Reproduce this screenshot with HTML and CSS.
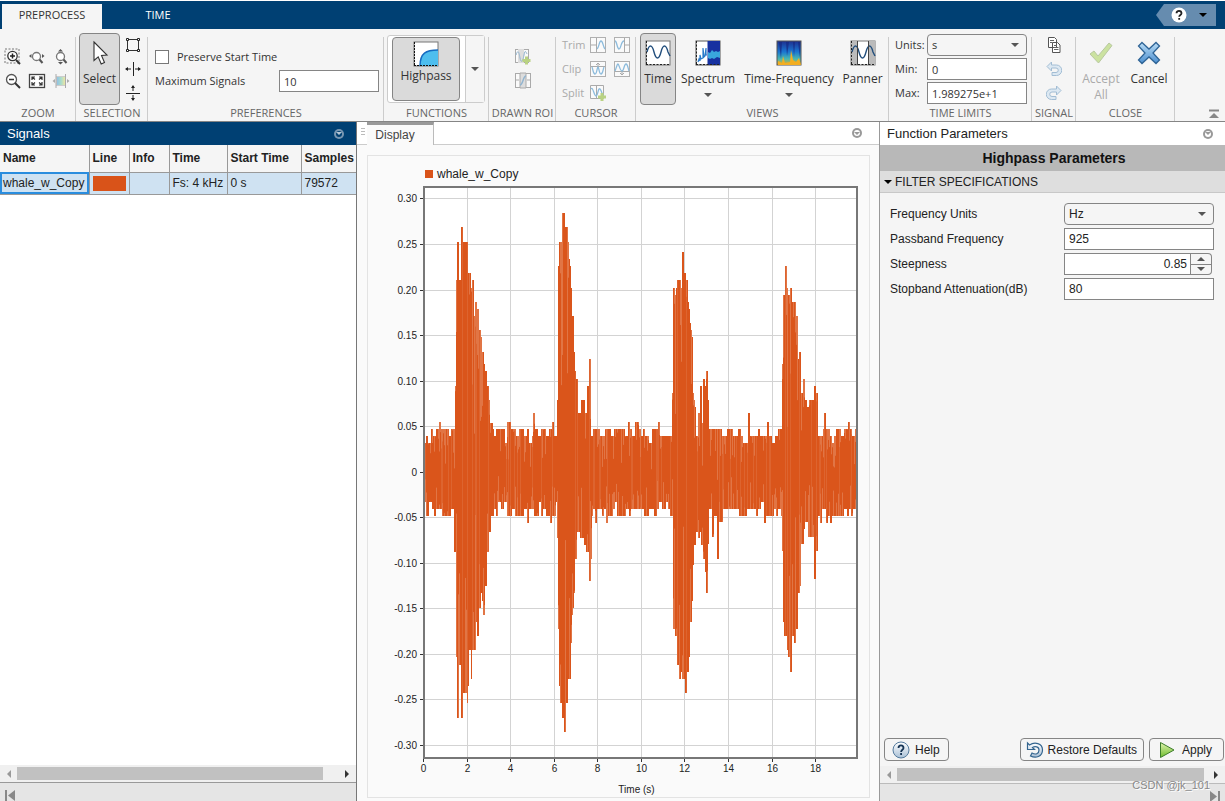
FILE: index.html
```html
<!DOCTYPE html>
<html lang="en">
<head>
<meta charset="utf-8">
<title>Signal Analyzer</title>
<link rel="stylesheet" href="styles.css">
</head>
<body>
<svg class="defs" aria-hidden="true">
  <defs>
    <linearGradient id="glass" x1="0" y1="0" x2="0" y2="1"><stop offset="0" stop-color="#ffffff"/><stop offset="1" stop-color="#a9c0d6"/></linearGradient>
    <linearGradient id="blue" x1="0" y1="0" x2="0" y2="1"><stop offset="0" stop-color="#b9dcf5"/><stop offset="1" stop-color="#4c8fd0"/></linearGradient>
    <linearGradient id="green" x1="0" y1="0" x2="0" y2="1"><stop offset="0" stop-color="#e2f4b0"/><stop offset="1" stop-color="#6dbb2d"/></linearGradient>
    <linearGradient id="parula" x1="0" y1="0" x2="1" y2="0"><stop offset="0" stop-color="#8fbde6"/><stop offset=".5" stop-color="#a8dccb"/><stop offset="1" stop-color="#f5e6a0"/></linearGradient>
    <linearGradient id="heat" x1="0" y1="0" x2="0" y2="1"><stop offset="0" stop-color="#1e2f8f"/><stop offset=".45" stop-color="#1a76d2"/><stop offset=".75" stop-color="#49b8b0"/><stop offset="1" stop-color="#eea91c"/></linearGradient>
    <symbol id="wavebox" viewBox="0 0 16 16"><rect x=".5" y=".5" width="15" height="15" fill="#fafafa" stroke="#b0b0b0"/></symbol>
    <symbol id="undo" viewBox="0 0 16 16"><path d="M5.500 1L1 5.500l4.500 4.500V7h4.500a2 2 0 0 1 0 4.500H6v3h4.500a5 5 0 0 0 0-10.500h-5z" fill="#dce8f2" stroke="#a2bdd4"/></symbol>
  </defs>
</svg>

<header class="titlebar">
  <nav class="tabs">
    <button class="tab active">PREPROCESS</button>
    <button class="tab">TIME</button>
  </nav>
  <button class="help-menu" aria-label="Help">
    <svg width="16" height="16" viewBox="0 0 16 16"><circle cx="8" cy="8" r="7.500" fill="#fff"/><path d="M5.500 6.300c0-3.300 5-3.300 5 0 0 1.700-2.300 1.700-2.300 3.500M8.200 11v1.800" fill="none" stroke="#222" stroke-width="1.800"/></svg>
    <span class="caret black"></span>
  </button>
</header>

<div class="toolbar">
  <section class="group zoom">
    <div class="body">
      <div class="icons">
        <button aria-label="Zoom in"><svg width="18" height="18" viewBox="0 0 18 18"><rect x="1" y="1" width="14" height="14" fill="none" stroke="#777" stroke-dasharray="2 1.500"/><circle cx="8.500" cy="8" r="4.700" fill="#fff" stroke="#333" stroke-width="1.300"/><path d="M6 8h5M8.500 5.500v5" stroke="#222" stroke-width="1.500"/><path d="M12 12l4 4" stroke="#333" stroke-width="2"/></svg></button>
        <button aria-label="Zoom in x"><svg width="18" height="18" viewBox="0 0 18 18"><circle cx="8.500" cy="8.500" r="4" fill="#fff" stroke="#777" stroke-width="1.300"/><path d="M11.500 11.500l3 3.500" stroke="#555" stroke-width="2"/><path d="M3.500 6v4L1 8zM14 6v4l2.500-2z" fill="#555"/></svg></button>
        <button aria-label="Zoom in y"><svg width="18" height="18" viewBox="0 0 18 18"><circle cx="8.500" cy="8.500" r="4" fill="#fff" stroke="#777" stroke-width="1.300"/><path d="M11.500 11.500l3 3.500" stroke="#555" stroke-width="2"/><path d="M6 3.500h5L8.500 1zM6 14h5l-2.500 2.500z" fill="#555"/></svg></button>
        <button aria-label="Zoom out"><svg width="18" height="18" viewBox="0 0 18 18"><circle cx="7.500" cy="7.500" r="5" fill="#fff" stroke="#555" stroke-width="1.300"/><path d="M5 7.500h5" stroke="#333" stroke-width="1.500"/><path d="M11 11l5 5" stroke="#333" stroke-width="2"/></svg></button>
        <button aria-label="Fit to view"><svg width="18" height="18" viewBox="0 0 18 18"><rect x="1.500" y="2.500" width="15" height="13" fill="#fff" stroke="#444" stroke-width="1.300"/><path d="M4 8V5h3M11 5h3v3M14 10v3h-3M7 13H4v-3M4 5l3 2.500M14 5l-3 2.500M4 13l3-2.500M14 13l-3-2.500" fill="none" stroke="#333" stroke-width="1.200"/></svg></button>
        <button aria-label="Pan" disabled><svg width="18" height="18" viewBox="0 0 18 18"><rect x="4.500" y="4.500" width="9" height="9" fill="url(#parula)" stroke="#ccc"/><path d="M4 2v14M13.500 2v14" stroke="#aaa"/><path d="M3 7v4L.500 9zM15 7v4l2.500-2z" fill="#aaa"/></svg></button>
      </div>
    </div>
    <h2>ZOOM</h2>
  </section>

  <section class="group selection">
    <div class="body">
      <button class="big pressed select-tool"><svg width="24" height="26" viewBox="0 0 24 26"><path d="M6 2l13 13-5.500.500 3 7-3.300 1.500-3-7.200L6 20.500z" fill="#fff" stroke="#333" stroke-width="1.100"/></svg><span>Select</span></button>
      <div class="stack">
        <button aria-label="Box select"><svg width="16" height="16" viewBox="0 0 16 16"><path d="M2.500 2.500h11v11h-11z" fill="none" stroke="#333"/><path d="M1.500 1.500h2v2h-2zM12.500 1.500h2v2h-2zM1.500 12.500h2v2h-2zM12.500 12.500h2v2h-2z" fill="#fff" stroke="#222"/></svg></button>
        <button aria-label="Horizontal select"><svg width="16" height="16" viewBox="0 0 16 16"><path d="M8.500 1v14M1 8h5M10 8h5" stroke="#222"/><path d="M3 6v4L0 8zM13 6v4L16 8z" fill="#222"/></svg></button>
        <button aria-label="Vertical select"><svg width="16" height="16" viewBox="0 0 16 16"><path d="M1 8.500h14M8 1v5M8 10v5" stroke="#222"/><path d="M6 3h4L8 0zM6 13h4L8 16z" fill="#222"/></svg></button>
      </div>
    </div>
    <h2>SELECTION</h2>
  </section>

  <section class="group preferences">
    <div class="body">
      <label class="check"><input type="checkbox">Preserve Start Time</label>
      <div class="field"><label for="maxsig">Maximum Signals</label><input id="maxsig" type="text" value="10"></div>
    </div>
    <h2>PREFERENCES</h2>
  </section>

  <section class="group functions">
    <div class="body">
      <div class="gallery">
        <button class="big pressed highpass"><svg width="26" height="26" viewBox="0 0 26 26"><rect x="1" y="1" width="24" height="24" fill="#fff" stroke="#777"/><path d="M7 25C7 12 13 9 25 9v16z" fill="#4ebeee"/><path d="M7 25C7 12 13 9 25 9" fill="none" stroke="#156bc1" stroke-width="1.500"/><path d="M1.500 1v24M1 24.500h24" stroke="#111" stroke-dasharray="2 1"/></svg><span>Highpass</span></button>
        <button class="more" aria-label="More functions"><span class="caret"></span></button>
      </div>
    </div>
    <h2>FUNCTIONS</h2>
  </section>

  <section class="group roi">
    <div class="body">
      <button disabled aria-label="Add region"><svg width="18" height="18" viewBox="0 0 18 18"><rect x="1.500" y="1.500" width="13" height="13" fill="#fafafa" stroke="#aaa"/><path d="M4 1v14h6V1z" fill="#ddd"/><path d="M2 7c2-6 3-3 4 3s3 3 4-3 2-3 3-1" fill="none" stroke="#92b4cf"/><path d="M12.500 8.500v8M8.500 12.500h8" stroke="#b9d283" stroke-width="3"/></svg></button>
      <button disabled aria-label="Edit region"><svg width="18" height="18" viewBox="0 0 18 18"><rect x="1.500" y="1.500" width="15" height="14" fill="#fafafa" stroke="#aaa"/><path d="M6 1v15h6V1z" fill="#ddd" stroke="#aaa"/><path d="M2 8h3M13 8h3" stroke="#aaa"/><path d="M6 13c3 0 3-9 6-9" fill="none" stroke="#92b4cf" stroke-width="1.500"/></svg></button>
    </div>
    <h2>DRAWN ROI</h2>
  </section>

  <section class="group cursor">
    <div class="body">
      <span>Trim</span>
      <button disabled aria-label="Trim left"><svg width="16" height="16"><use href="#wavebox"/><path d="M6.500 1v14M1 8h5" stroke="#aaa"/><path d="M7 12c2-1 2-8 4-8s2 6 4 8" fill="none" stroke="#8cbbdc" stroke-width="1.300"/></svg></button>
      <button disabled aria-label="Trim right"><svg width="16" height="16"><use href="#wavebox"/><path d="M10.500 1v14M11 8h5" stroke="#aaa"/><path d="M1 4c2 0 2 8 4 8s2-8 5-8" fill="none" stroke="#8cbbdc" stroke-width="1.300"/></svg></button>
      <span>Clip</span>
      <button disabled aria-label="Clip above"><svg width="16" height="16"><use href="#wavebox"/><path d="M1 5.500h14M8 2v4M6 4l2-2 2 2" fill="none" stroke="#aaa"/><path d="M2 6c1 2 1 7 3 7s2-7 3-7 1 7 3 7 2-5 3-7" fill="none" stroke="#8cbbdc" stroke-width="1.300"/></svg></button>
      <button disabled aria-label="Clip below"><svg width="16" height="16"><use href="#wavebox"/><path d="M1 10.500h14M8 14v-4M6 12l2 2 2-2" fill="none" stroke="#aaa"/><path d="M1 10c1-2 2-7 3-7s2 7 4 7 2-7 4-7 2 5 3 7" fill="none" stroke="#8cbbdc" stroke-width="1.300"/></svg></button>
      <span>Split</span>
      <button disabled aria-label="Split"><svg width="16" height="16" viewBox="0 0 16 16"><path d="M.500.500h13v13H.500z" fill="#fafafa" stroke="#aaa"/><path d="M6.500 1v13" stroke="#aaa"/><path d="M1 4c2-3 3 7 5 7s2-9 4-7 2 7 4 7" fill="none" stroke="#8cbbdc" stroke-width="1.300"/><path d="M12 8v8M8 12h8" stroke="#b9d283" stroke-width="3"/></svg></button>
    </div>
    <h2>CURSOR</h2>
  </section>

  <section class="group views">
    <div class="body">
      <button class="big pressed time"><svg width="26" height="26" viewBox="0 0 26 26"><rect x="1" y="1" width="24" height="24" fill="#fff" stroke="#777"/><path d="M2 12C4 4 7 4 9 12s5 8 7 0 5-8 7 0l2 4" fill="none" stroke="#234f7d" stroke-width="1.400"/><path d="M1.500 1v24M1 24.500h24" stroke="#222" stroke-dasharray="2 1.500"/></svg><span>Time</span></button>
      <button class="big spectrum"><svg width="26" height="26" viewBox="0 0 26 26"><rect x="1" y="1" width="24" height="24" fill="#fff" stroke="#555"/><path d="M12.500 1h12.500v24H12.500z" fill="#1731a0"/><path d="M13 12l2 1 2-3 2 2 2-1 2 1 2-1v7l-3-1-3 2-2-1-2 1-2-1z" fill="#39a6dd"/><path d="M3 22l1-3 1 2V15l1 4 2-1V8l1 9 1-1 1-8v7h1" fill="none" stroke="#2879c9" stroke-width="1.200"/><path d="M1.500 1v24M1 24.500h24" stroke="#222" stroke-dasharray="2 1.500"/></svg><span>Spectrum</span><i class="caret"></i></button>
      <button class="big frequency"><svg width="26" height="26" viewBox="0 0 26 26"><rect x="1" y="1" width="24" height="24" fill="url(#heat)" stroke="#555"/><path d="M3 2h3l-1 17zM10 2h3l-2 14zM17 2h2l-1 15zM22 2h2v16z" fill="#172983" opacity=".75"/><path d="M2 25v-4l4 2 1-7 2 7 5-1 1-12 2 10 3 2 3-4 2 7z" fill="#f3ae21"/></svg><span>Time-Frequency</span><i class="caret"></i></button>
      <button class="big panner"><svg width="26" height="26" viewBox="0 0 26 26"><rect x="1" y="1" width="24" height="24" fill="#fff" stroke="#777"/><path d="M1 1h6v24H1zM19 1h6v24h-6z" fill="#bbb"/><path d="M2 12C4 4 7 4 9 12s5 8 7 0 5-8 7 0l2 4" fill="none" stroke="#234f7d" stroke-width="1.400"/><path d="M7.500 1v24M18.500 1v24" stroke="#444"/><path d="M1.500 1v24M1 24.500h24" stroke="#222" stroke-dasharray="2 1.500"/></svg><span>Panner</span></button>
    </div>
    <h2>VIEWS</h2>
  </section>

  <section class="group limits">
    <div class="body">
      <label for="units">Units:</label><span class="select"><select id="units"><option>s</option></select></span>
      <label for="min">Min:</label><input id="min" type="text" value="0">
      <label for="max">Max:</label><input id="max" type="text" value="1.989275e+1">
    </div>
    <h2>TIME LIMITS</h2>
  </section>

  <section class="group signal">
    <div class="body">
      <button aria-label="Duplicate"><svg width="16" height="16" viewBox="0 0 16 16"><path d="M2.500.500h6l2 2v8h-8zM6.500 5.500h5l2.500 2.500v7.500H6.500z" fill="#fff" stroke="#555"/><path d="M4 3.500h4M4 5.500h2M8 8.500h3M8 10.500h4.500M8 12.500h4.500" stroke="#666"/></svg></button>
      <button disabled aria-label="Undo"><svg width="16" height="16"><use href="#undo"/></svg></button>
      <button disabled aria-label="Redo"><svg class="flip" width="16" height="16"><use href="#undo"/></svg></button>
    </div>
    <h2>SIGNAL</h2>
  </section>

  <section class="group close">
    <div class="body">
      <button class="big accept" disabled><svg width="26" height="26" viewBox="0 0 26 26"><path d="M2 14l4-3 4 5L21 3l3 2.500L10.500 23z" fill="#cbe2a0" stroke="#b8c8a0"/></svg><span>Accept All</span></button>
      <button class="big cancel"><svg width="26" height="26" viewBox="0 0 26 26"><path d="M6 2.500l7 6.500 7-6.500 3.500 3.500-6.500 7 6.500 7-3.500 3.500-7-6.500-7 6.500L2.500 20l6.500-7-6.500-7z" fill="url(#blue)" stroke="#2f6496" stroke-width="1.300"/></svg><span>Cancel</span></button>
    </div>
    <h2>CLOSE</h2>
  </section>
  <button class="collapse" aria-label="Collapse toolbar"><svg width="12" height="10" viewBox="0 0 12 10"><path d="M1 1.500h10" stroke="#888" stroke-width="2"/><path d="M6 4l5 5H1z" fill="#888"/></svg></button>
</div>

<main class="workspace">
  <section class="signals">
    <header class="panel-head dark"><h3>Signals</h3><button class="round" aria-label="Signals menu"><span class="caret"></span></button></header>
    <div class="fill">
      <table>
        <colgroup><col class="c-name"><col class="c-line"><col class="c-info"><col class="c-time"><col class="c-start"><col></colgroup>
        <thead><tr><th>Name</th><th>Line</th><th>Info</th><th>Time</th><th>Start Time</th><th>Samples</th></tr></thead>
        <tbody><tr><td class="focus">whale_w_Copy</td><td><span class="swatch"></span></td><td></td><td>Fs: 4 kHz</td><td>0 s</td><td>79572</td></tr></tbody>
      </table>
    </div>
    <div class="scroll"><span class="left"></span><span class="thumb"></span><span class="right"></span></div>
    <footer class="dock"><svg width="12" height="12" viewBox="0 0 12 12"><path d="M2 1v11" stroke="#888" stroke-width="2"/><path d="M11 1v11L4 6.500z" fill="#888"/></svg></footer>
  </section>

  <section class="display">
    <header class="panel-head"><span class="grip"></span><button class="display-tab">Display</button><button class="round" aria-label="Display menu"><span class="caret"></span></button></header>
    <div class="card"><div class="legend"><span></span>whale_w_Copy</div><svg id="chart" class="chart" role="img" aria-label="whale_w_Copy"></svg></div>
  </section>

  <section class="params">
    <header class="panel-head"><h3>Function Parameters</h3><button class="round" aria-label="Parameters menu"><span class="caret"></span></button></header>
    <h2 class="params-title">Highpass Parameters</h2>
    <h4 class="params-section"><span class="caret black"></span>FILTER SPECIFICATIONS</h4>
    <form class="fill">
      <label for="fu">Frequency Units</label><span class="select"><select id="fu"><option>Hz</option></select></span>
      <label for="pf">Passband Frequency</label><input id="pf" type="text" value="925">
      <label for="st">Steepness</label><span class="spinner"><input id="st" type="text" inputmode="decimal" value="0.85"><span><button type="button" aria-label="Increase"><i class="caret up"></i></button><button type="button" aria-label="Decrease"><i class="caret"></i></button></span></span>
      <label for="sa">Stopband Attenuation(dB)</label><input id="sa" type="text" value="80">
    </form>
    <div class="actions">
      <button><svg width="18" height="18" viewBox="0 0 18 18"><circle cx="9" cy="9" r="8" fill="url(#glass)" stroke="#557b9e"/><path d="M6.500 7c0-3.500 5-3.500 5 0 0 1.700-2.400 1.900-2.400 4M9.100 12v2" fill="none" stroke="#173555" stroke-width="1.800"/></svg>Help</button>
      <button class="restore"><svg width="18" height="18" viewBox="0 0 18 18"><path d="M1.500 2l2 2c5-3.500 13-2 13 5 0 7-7 8.500-12 6l1.500-3c3.500 2 7 1 7-3 0-3.500-4-4-6.500-2.500l2 2h-7z" fill="url(#glass)" stroke="#34658f" stroke-width="1.200"/></svg>Restore Defaults</button>
      <button class="apply"><svg width="16" height="18" viewBox="0 0 16 18"><path d="M1.500 1.500L15 9 1.500 16.500z" fill="url(#green)" stroke="#3c7d2a"/></svg>Apply</button>
    </div>
    <div class="scroll"><span class="left"></span><span class="thumb"></span><span class="right"></span></div>
    <footer class="dock"><svg width="12" height="12" viewBox="0 0 12 12"><path d="M10 1v11" stroke="#888" stroke-width="2"/><path d="M1 1v11l7-5.500z" fill="#888"/></svg></footer>
    <span class="watermark">CSDN @jk_101</span>
  </section>
</main>
<script src="chart.js"></script>
</body>
</html>
```

FILE: styles.css
```css
* { box-sizing: border-box; }
body { margin: 0; height: 100vh; overflow: hidden; display: flex; flex-direction: column; font: 12px/16px "Liberation Sans", Arial, sans-serif; color: #222; background: #f5f5f5; border-top: 1px solid #fff; }
button, input, select { font: inherit; color: inherit; margin: 0; }
button { border: 0; padding: 0; background: none; display: flex; align-items: center; justify-content: center; }
h2, h3, h4 { margin: 0; font-weight: normal; }
input[type="text"], select { width: 100%; height: 22px; border: 1px solid #858585; background: #fff; padding: 0 4px; border-radius: 0; min-width: 0; }
select { appearance: none; background: #f5f5f5; border-radius: 4px; }
.select { position: relative; }
.select::after { content: ""; position: absolute; right: 8px; top: 9px; border: 4px solid transparent; border-top: 4px solid #555; border-bottom: 0; pointer-events: none; }
.defs { position: absolute; width: 0; height: 0; }
.caret { flex: none; display: block; width: 0; height: 0; border: 4px solid transparent; border-top-color: #555; border-bottom: 0; }
.caret.black { border-top-color: #000; }
.caret.up { border-top: 0; border-bottom: 4px solid #555; }

.titlebar { flex: none; display: flex; justify-content: space-between; height: 28px; background: #004073; }
.tabs { display: flex; padding: 3px 0 0 2px; }
.tab { width: 100px; padding-bottom: 3px; font: 11px/16px "Open Sans", sans-serif; color: #fff; }
.tab + .tab { width: 112px; }
.tab.active { background: #f5f5f5; color: #333; }
.help-menu { width: 60px; height: 22px; margin: 3px 9px 0 0; padding-left: 6px; gap: 12px; background: #668caf; clip-path: polygon(8px 0, 100% 0, 100% 100%, 8px 100%, 0 50%); }

.toolbar { flex: none; display: flex; height: 93px; padding-top: 4px; background: #f5f5f5; border-bottom: 1px solid #858585; font: 12px/16px "Open Sans", sans-serif; color: #333; }
.group { flex: none; display: flex; flex-direction: column; background: linear-gradient(#ccc, #ccc) right 4px / 1px 100% no-repeat; }
.group .body { flex: 1; display: flex; }
.group h2 { height: 16px; font-size: 11px; line-height: 16px; text-align: center; color: #666; white-space: nowrap; }
.group button:disabled { color: #aaa; }
.big { flex-direction: column; justify-content: flex-start; height: 72px; padding-top: 6px; border: 1px solid transparent; border-radius: 4px; }
.big svg { flex: none; }
.big span { margin-top: 5px; white-space: nowrap; }
.big .caret { margin-top: 6px; }
.pressed { background: #dadada; border-color: #858585; }
.zoom { width: 76px; }
.icons { display: grid; grid-template-columns: repeat(3, 24px); grid-auto-rows: 24px; padding: 12px 0 0 1px; }
.selection { width: 72px; }
.selection .body { padding-left: 3px; }
.select-tool { width: 41px; }
.stack { display: flex; flex-direction: column; gap: 8px; padding: 4px 0 0 5px; }
.preferences { width: 236px; }
.preferences .body { flex-direction: column; gap: 2px; padding: 13px 5px 0 7px; }
.preferences, .limits, .cursor { font-size: 11px; }
.check { display: flex; align-items: center; gap: 8px; height: 22px; }
.check input { appearance: none; width: 14px; height: 14px; border: 1px solid #777; background: #fff; }
.field { display: flex; align-items: center; justify-content: space-between; }
.field input[type="text"] { width: 100px; }
.functions { width: 105px; }
.functions .body { padding: 2px 4px 0 3px; }
.gallery { display: flex; width: 98px; height: 68px; border: 1px solid #ccc; border-radius: 3px; background: #fff; }
.highpass { width: 68px; height: 64px; margin: 1px 5px 0 4px; padding-top: 3px; }
.highpass span { margin-top: 1px; }
.more { flex: 1; background: #f5f5f5; border-left: 1px solid #ccc; }
.roi { width: 67px; }
.roi .body { flex-direction: column; align-items: center; gap: 6px; padding-top: 15px; }
.cursor { width: 80px; }
.cursor .body { display: grid; grid-template: repeat(3, 16px) / 20px 16px 16px; gap: 8px; padding: 4px 0 0 6px; color: #aaa; align-content: start; }
.views { width: 253px; }
.views .body { padding-left: 4px; }
.time { width: 36px; }
.spectrum { width: 64px; }
.frequency { width: 98px; }
.panner { width: 49px; }
.limits { width: 143px; }
.limits .body { display: grid; grid-template-columns: 29px 100px; gap: 2px 3px; padding: 1px 0 0 6px; align-items: center; align-content: start; }
.signal { width: 44px; }
.signal .body { flex-direction: column; align-items: center; gap: 8px; padding-top: 4px; }
.flip { transform: scaleX(-1); }
.close { width: 99px; }
.close .body { padding-left: 1px; }
.accept { width: 48px; }
.accept span { white-space: normal; }
.cancel { width: 48px; }
.collapse { margin: auto 5px 2px auto; }

.workspace { flex: 1; min-height: 0; display: grid; grid-template-columns: 357px minmax(0, 1fr) 346px; }
.workspace > section { display: flex; flex-direction: column; min-width: 0; min-height: 0; }
.panel-head { flex: none; display: flex; align-items: center; justify-content: space-between; height: 23px; padding: 0 12px 0 7px; background: #fff; }
.panel-head h3 { font-size: 13px; }
.panel-head.dark { background: #004073; color: #fff; }
.round { width: 10px; height: 10px; border-radius: 50%; background: #999; }
.round::before { content: ""; width: 6px; height: 6px; border-radius: 50%; background: #fff; }
.round .caret { border-width: 3px 3px 0; border-top-color: #999; margin-left: -6px; }
.dark .round { background: #7896b2; }
.dark .round::before { background: #004073; }
.dark .round .caret { border-top-color: #b5c7d6; }
.fill { flex: 1; min-height: 0; }
.signals { border-right: 1px solid #777; background: #fff; }
table { width: 100%; table-layout: fixed; border-collapse: collapse; white-space: nowrap; }
.c-name { width: 89px; }
.c-line { width: 40px; }
.c-info { width: 40px; }
.c-time { width: 58px; }
.c-start { width: 74px; }
th, td { border: 1px solid #999; padding: 0 3px; text-align: left; overflow: hidden; }
th:first-child { border-left: 0; padding-left: 3px; }
th:last-child, td:last-child { border-right: 0; }
th { height: 27px; background: #f5f5f5; border-top: 0; }
td { height: 22px; background: #cfe2f2; }
td.focus { border-left: 0; padding: 0 2px 0 3px; outline: 2px solid #2a8dde; outline-offset: -2px; }
.swatch { display: block; height: 15px; background: #d95319; }
.scroll { flex: none; display: flex; align-items: center; height: 17px; padding: 0 7px; background: #f0f0f0; }
.scroll .left, .scroll .right { border: 4px solid transparent; }
.scroll .left { border-left: 0; border-right-color: #999; }
.scroll .right { border-right: 0; border-left-color: #333; }
.thumb { flex: 1; height: 13px; margin: 0 22px 0 6px; background: #c1c1c1; }
.params .thumb { margin-right: 10px; }
.dock { flex: none; display: flex; height: 19px; padding: 6px 4px 0; background: #e5e5e5; border-top: 1px solid #999; }

.display { background: #fafafa; }
.display .panel-head { padding: 0 17px 0 0; border-bottom: 1px solid #ccc; }
.grip { align-self: stretch; width: 9px; margin-right: 1px; background: repeating-linear-gradient(#bbb 0 1px, #fff 1px 3px) 4px 6px / 4px 9px no-repeat; }
.display-tab { align-self: stretch; width: 67px; margin: 0 auto -1px 0; padding-right: 10px; background: #fafafa; border-top: 3px solid #999; border-right: 1px solid #bbb; color: #444; }
.card { flex: 1; min-height: 0; display: flex; flex-direction: column; margin: 10px 9px 3px 10px; border: 1px solid #e3e3e3; }
.legend { flex: none; display: flex; align-items: center; gap: 4px; padding: 10px 0 0 57px; }
.legend span { width: 8px; height: 8px; background: #d95319; }
.chart { flex: 1; display: block; width: 100%; min-height: 0; font-size: 10px; fill: #222; }

.params { position: relative; border-left: 1px solid #999; background: #f5f5f5; }
.params-title { height: 26px; padding-left: 3px; font-size: 14px; line-height: 26px; font-weight: bold; text-align: center; background: #b8b8b8; color: #111; }
.params-section { display: flex; align-items: center; gap: 3px; height: 22px; padding-left: 4px; background: #dedede; border-bottom: 1px solid #c8c8c8; }
.params form { display: grid; grid-template-columns: 171px 1fr; grid-auto-rows: 22px; gap: 3px; padding: 10px 11px 0 10px; align-items: center; align-content: start; }
.spinner { display: flex; padding-right: 2px; }
.spinner input[type="text"] { text-align: right; padding-right: 3px; }
.spinner > span { flex: none; width: 21px; display: flex; flex-direction: column; border: 1px solid #858585; border-left: 0; border-radius: 0 4px 4px 0; }
.spinner button { flex: 1; }
.spinner button + button { border-top: 1px solid #858585; }
.actions { display: flex; gap: 5px; padding: 0 1px 5px 4px; }
.actions button { height: 23px; padding: 0 8px 0 7px; gap: 5px; border: 1px solid #858585; border-radius: 4px; }
.actions .restore { margin-left: auto; padding: 0 6px 0 5px; gap: 4px; }
.actions .apply { padding: 0 11px 0 9px; gap: 7px; }
.params .dock { justify-content: flex-end; height: 18px; border-top-color: #bbb; }
.watermark { position: absolute; right: 15px; bottom: 8px; font-size: 11px; color: #888; text-shadow: 1px 1px #fff; }
```

FILE: chart.js
```js
// Peak envelopes as [column, level]; null returns to the noise floor. One level is 1/128.
const COLUMNS = 433;
const DURATION = 19.89;
const upper = [[0,null],[31,12.2],[32,27],[33,32.4],[35,27],[37,34.5],[39,32.4],[44,28],[47,26],[48,27],[50,22],[51,24],[53,23],[55,20],[57,19],[58,17],[60,15.3],[61,14.2],[63,12.2],[65,10.2],[66,7],[69,null],
[109,8.3],[111,null],[133,10.2],[134,29],[135,32.4],[138,36.5],[141,34.5],[144,32.4],[145,30],[146,29],[147,26],[148,22],[150,17],[151,14.2],[152,13.2],[154,8.3],[157,10.2],[161,8.3],[163,12.2],[165,16],[167,null],
[248,11.2],[249,26],[251,25],[252,26],[253,27],[257,26],[258,31],[260,28],[262,27],[264,24],[265,23],[266,21],[267,20],[268,19],[269,11.2],[270,10.2],[271,9.2],[272,null],[274,8.3],[276,12.2],[278,7],[279,13.2],[281,12.2],[282,14.2],[284,10.2],[285,null],
[324,8.3],[326,null],[358,15.3],[359,25],[361,29],[363,26],[364,25],[366,26],[368,24],[372,22],[374,16],[375,17],[377,11.2],[379,13.2],[381,10.2],[383,9.2],[385,10.2],[390,12.2],[392,11.2],[394,null],[400,8.3],[402,null]];
const lower = [[0,null],[30,11.2],[32,26],[33,34.5],[35,27],[37,34.5],[39,31],[43,32.4],[44,30],[45,25],[47,29],[48,25],[52,21],[53,23],[55,19],[57,17],[58,18],[59,20],[61,16],[63,11.2],[65,8.3],[67,null],
[133,9.2],[134,22],[135,30],[136,32.4],[138,34.5],[140,36.5],[142,32.4],[144,29],[147,24],[148,20],[149,19],[150,17],[151,12.2],[153,8.3],[156,9.2],[160,10.2],[162,11.2],[165,15.2],[167,12.2],[168,null],
[249,22],[251,23],[253,27],[255,29],[257,28],[258,29],[261,31],[263,28],[265,26],[266,21],[268,18],[269,13],[270,10.2],[272,8.3],[274,9.2],[276,8.3],[277,10.2],[279,12.2],[281,14],[282,17],[284,10],[285,null],[288,9],[290,null],[293,12.2],[295,7],[299,null],
[358,11],[359,21],[360,23],[363,25],[364,26],[366,28],[368,23],[370,24],[372,22],[374,17],[376,16],[377,10],[380,8],[381,7],[384,9],[390,15],[392,11],[394,null]];

function expand(steps, random) {
  const out = [];
  let next = 0, value = null, noise = 5, hold = 0;
  for (let i = 0; i < COLUMNS; i++) {
    while (next < steps.length && steps[next][0] <= i) value = steps[next++][1];
    if (hold-- <= 0) {
      const r = random();
      noise = r < .08 ? 4.2 : r < .48 ? 5.1 : r < .93 ? 6.1 : 7.1;
      hold = noise > 7 ? 1 : 1 + Math.floor(random() * 2);
    }
    out.push(value === null ? noise : value);
  }
  return out;
}

function draw() {
  const svg = document.getElementById('chart');
  const box = svg.getBoundingClientRect();
  let seed = 77;
  const random = () => (seed = (seed * 16807) % 2147483647) / 2147483647;
  const left = 56, top = 5, right = Math.round(box.width) - 12, bottom = Math.round(box.height) - 39;
  const w = right - left, h = bottom - top;
  const X = t => left + t * w / DURATION;
  const Y = v => top + h / 2 - v * h / 0.627;
  const rect = (x, y, rw, rh, fill, o) => `<rect x="${x}" y="${y}" width="${rw}" height="${rh}" fill="${fill}" opacity="${o}"/>`;
  let s = rect(left, top, w, h, '#fff', 1);
  const line = (x1, y1, x2, y2, c) => `<path d="M${x1} ${y1}L${x2} ${y2}" stroke="${c}"/>`;
  const snap = n => Math.floor(n) + .5;
  for (let i = -6; i <= 6; i++) {
    const y = snap(Y(i / 20) - .3);
    s += line(left, y, right, y, '#d3d3d3') + line(left - 4, y, left, y, '#333');
    s += `<text x="${left - 7}" y="${y + 3}" text-anchor="end">${i ? (i / 20).toFixed(2) : 0}</text>`;
  }
  for (let t = 0; t < 20; t += 2) {
    const x = snap(X(t) - .3);
    s += line(x, top, x, bottom, '#d3d3d3') + line(x, bottom, x, bottom + 4, '#333');
    s += `<text x="${x}" y="${bottom + 14}" text-anchor="middle">${t}</text>`;
  }
  const hi = expand(upper, random), lo = expand(lower, random);
  // One bar per device column keeps the trace free of seams at any width.
  for (let p = 0; p < w; p++) {
    const i = Math.min(COLUMNS - 1, Math.floor(p * COLUMNS / w));
    const x = left + p;
    const y1 = Math.round(Y(hi[i] / 128)), y2 = Math.round(Y(-lo[i] / 128));
    s += rect(x, y1, 1, y2 - y1, '#e17545', 1);
    const a = random() < .35 ? random() * .4 : 0;
    const b = random() < .35 ? random() * .4 : 0;
    s += rect(x, y1 + (y2 - y1) * a, 1, (y2 - y1) * (1 - a - b), '#d95319', random() < .12 ? .5 : .95);
  }
  s += `<rect x="${left}" y="${top}" width="${w}" height="${h}" fill="none" stroke="#777" stroke-width="2"/>`;
  s += `<text x="${left + w / 2 - 4}" y="${bottom + 35}" text-anchor="middle">Time (s)</text>`;
  svg.innerHTML = s;
}
draw();
addEventListener('resize', draw);
```
